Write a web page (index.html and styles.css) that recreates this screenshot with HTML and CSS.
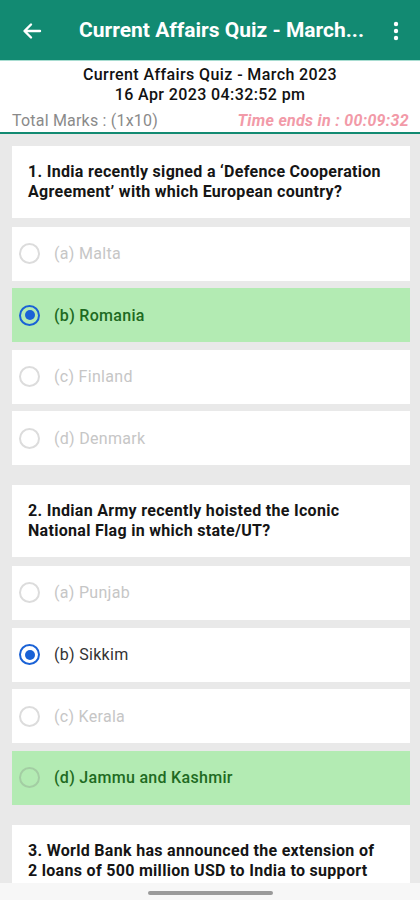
FILE: index.html
```html
<!DOCTYPE html>
<html>
<head>
<meta charset="utf-8">
<link rel="stylesheet" href="styles.css">
</head>
<body>
<div class="app">
  <header class="topbar">
    <svg class="back" width="24" height="24" viewBox="0 0 24 24"><path d="M20 12H5M11 5.5L4.5 12L11 18.5" fill="none" stroke="#fff" stroke-width="2.4" stroke-linecap="round" stroke-linejoin="round"/></svg>
    <div class="title">Current Affairs Quiz - March...</div>
    <svg class="more" width="8" height="22" viewBox="0 0 8 22"><circle cx="4" cy="4" r="2.2" fill="#fff"/><circle cx="4" cy="11" r="2.2" fill="#fff"/><circle cx="4" cy="18" r="2.2" fill="#fff"/></svg>
  </header>
  <section class="info">
    <div class="info-title">Current Affairs Quiz - March 2023</div>
    <div class="info-date">16 Apr 2023 04:32:52 pm</div>
    <div class="info-row">
      <span class="marks">Total Marks : (1x10)</span>
      <span class="timer">Time ends in : 00:09:32</span>
    </div>
  </section>
  <main class="list">
    <div class="group">
      <div class="card question">1. India recently signed a ‘Defence Cooperation Agreement’ with which European country?</div>
      <div class="card option"><span class="radio"></span><span class="opt-text">(a) Malta</span></div>
      <div class="card option correct"><span class="radio checked"></span><span class="opt-text">(b) Romania</span></div>
      <div class="card option"><span class="radio"></span><span class="opt-text">(c) Finland</span></div>
      <div class="card option"><span class="radio"></span><span class="opt-text">(d) Denmark</span></div>
    </div>
    <div class="group">
      <div class="card question">2. Indian Army recently hoisted the Iconic National Flag in which state/UT?</div>
      <div class="card option"><span class="radio"></span><span class="opt-text">(a) Punjab</span></div>
      <div class="card option chosen"><span class="radio checked"></span><span class="opt-text">(b) Sikkim</span></div>
      <div class="card option"><span class="radio"></span><span class="opt-text">(c) Kerala</span></div>
      <div class="card option correct"><span class="radio"></span><span class="opt-text">(d) Jammu and Kashmir</span></div>
    </div>
    <div class="group">
      <div class="card question">3. World Bank has announced the extension of 2 loans of 500 million USD to India to support which sector?</div>
    </div>
  </main>
  <div class="navbar"><span class="pill"></span></div>
</div>
</body>
</html>
```

FILE: styles.css
```css
* { box-sizing: border-box; }
html, body { margin: 0; padding: 0; }
body {
  width: 420px;
  height: 900px;
  overflow: hidden;
  background: #e9e9e9;
  font-family: Roboto, "Noto Sans", "Liberation Sans", sans-serif;
}
.app { width: 420px; height: 900px; overflow: hidden; position: relative; }
.topbar {
  height: 61px;
  background: #128a72;
  border-bottom: 1px solid #a8ddd1;
  display: flex;
  align-items: center;
  padding: 0 0 0 20px;
}
.back { flex: none; margin-top: 1px; }
.title {
  flex: 1;
  min-width: 0;
  margin-left: 35px;
  color: #fff;
  font-size: 21px;
  font-weight: 700;
  white-space: nowrap;
}
.more { flex: none; margin-right: 20px; margin-top: 1px; }
.info {
  background: #fff;
  height: 73px;
  border-bottom: 2px solid #128a72;
  padding-top: 4px;
  text-align: center;
  color: #111;
}
.info-title, .info-date {
  font-size: 16px;
  font-weight: 500;
  line-height: 20px;
  letter-spacing: 0.4px;
}
.info-row {
  display: flex;
  justify-content: space-between;
  padding: 0 11px 0 12px;
  margin-top: 6px;
  font-size: 16px;
  line-height: 19px;
}
.marks { color: #8a8a8a; letter-spacing: 0.2px; }
.timer { color: #f29aa8; font-style: italic; font-weight: 700; letter-spacing: 0.3px; }
.list { padding: 12px 10px 0 12px; }
.group { display: flex; flex-direction: column; gap: 7.6px; margin-bottom: 20px; }
.card { background: #fff; }
.question {
  min-height: 72px;
  padding: 16px 24px 16px 16px;
  font-size: 16px;
  font-weight: 700;
  line-height: 20px;
  letter-spacing: 0.3px;
  color: #151515;
  margin-bottom: 1px;
}
.option {
  height: 54px;
  display: flex;
  align-items: center;
  padding-left: 7px;
}
.radio {
  width: 21px;
  height: 21px;
  border-radius: 50%;
  border: 2px solid #dcdcdc;
  flex: none;
  position: relative;
}
.radio.checked { border-color: #1a62d6; }
.radio.checked::after {
  content: "";
  position: absolute;
  left: 3.5px; top: 3.5px;
  width: 10px; height: 10px;
  border-radius: 50%;
  background: #1a62d6;
}
.opt-text {
  margin-left: 14px;
  font-size: 16px;
  letter-spacing: 0.3px;
  color: #c6c6c6;
}
.correct { background: #b3ebb3; }
.correct .opt-text { color: #1e6a22; font-weight: 500; }
.correct .radio:not(.checked) { border-color: #a3cda3; }
.chosen .opt-text { color: #333; }
.navbar {
  position: absolute;
  left: 0; right: 0; bottom: 0;
  height: 17px;
  background: #f7f7f7;
  display: flex;
  justify-content: center;
  padding-top: 8px;
}
.pill { width: 125px; height: 4px; border-radius: 2px; background: #9a9a9a; }
```
